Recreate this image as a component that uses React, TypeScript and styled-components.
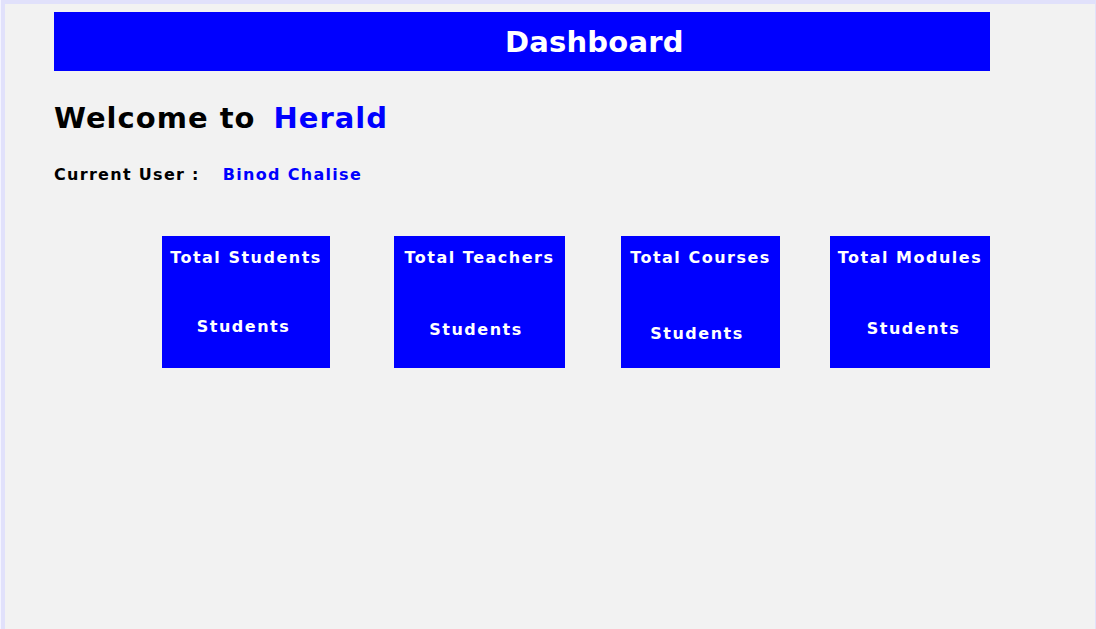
import React from 'react';
import styled, {createGlobalStyle} from "styled-components";

const GlobalStyle = createGlobalStyle`
  html, body {
    margin: 0;
    padding: 0;
    background: #f4f4ff;
  }
  * {
    box-sizing: border-box;
  }
`

const Window = styled.div`
  margin-left: 1px;
  height: 629px;
  width: 1095px;
  background: #f2f2f2;
  border-top: 4px solid #e1e1fb;
  border-left: 4px solid #e1e1fb;
  border-right: 1px solid #e1e1fb;
  padding: 8px 0 0 49px;
  font-family: "DejaVu Sans", "Liberation Sans", sans-serif;
  font-weight: 700;
`

const Header = styled.div`
  width: 936px;
  height: 59px;
  background: #0000ff;
  color: #fff;
  display: flex;
  align-items: center;
  padding-left: 451px;
  font-size: 29px;
  letter-spacing: 0.2px;
  line-height: 34px;
`

const Welcome = styled.div`
  margin-top: 29px;
  display: flex;
  gap: 18px;
  font-size: 29px;
  line-height: 36px;
  letter-spacing: 1px;
  color: #000;
`

const Highlight = styled.span`
  color: #0000ff;
`

const UserLine = styled.div`
  margin-top: 29px;
  display: flex;
  gap: 23px;
  font-size: 16px;
  line-height: 20px;
  letter-spacing: 1.3px;
  color: #000;
`

const CardRow = styled.div`
  margin-top: 51px;
  display: flex;
  align-items: flex-start;
`

const Card = styled.div<{ $w: number, $ml: number }>`
  width: ${p => p.$w}px;
  height: 132px;
  margin-left: ${p => p.$ml}px;
  background: #0000ff;
  color: #fff;
  display: flex;
  flex-direction: column;
  align-items: center;
  padding-top: 12px;
  font-size: 16px;
  line-height: 20px;
  letter-spacing: 1.5px;
`

const CardTitle = styled.div`
  white-space: nowrap;
`

const CardValue = styled.div<{ $top: number, $dx: number }>`
  margin-top: ${p => p.$top}px;
  padding-left: ${p => Math.max(0, p.$dx * 2)}px;
  padding-right: ${p => Math.max(0, -p.$dx * 2)}px;
`

const cards = [
    {title: 'Total Students', w: 168, ml: 108, top: 49, dx: -2.5},
    {title: 'Total Teachers', w: 171, ml: 64, top: 52, dx: -3.5},
    {title: 'Total Courses', w: 159, ml: 56, top: 56, dx: -3.5},
    {title: 'Total Modules', w: 160, ml: 50, top: 51, dx: 3.5},
]

export default function App() {
    return (
        <>
            <GlobalStyle/>
            <Window>
                <Header>Dashboard</Header>
                <Welcome>
                    <span>Welcome to</span>
                    <Highlight>Herald</Highlight>
                </Welcome>
                <UserLine>
                    <span>Current User :</span>
                    <Highlight>Binod Chalise</Highlight>
                </UserLine>
                <CardRow>
                    {cards.map(c => (
                        <Card key={c.title} $w={c.w} $ml={c.ml}>
                            <CardTitle>{c.title}</CardTitle>
                            <CardValue $top={c.top} $dx={c.dx}>Students</CardValue>
                        </Card>
                    ))}
                </CardRow>
            </Window>
        </>
    );
}
